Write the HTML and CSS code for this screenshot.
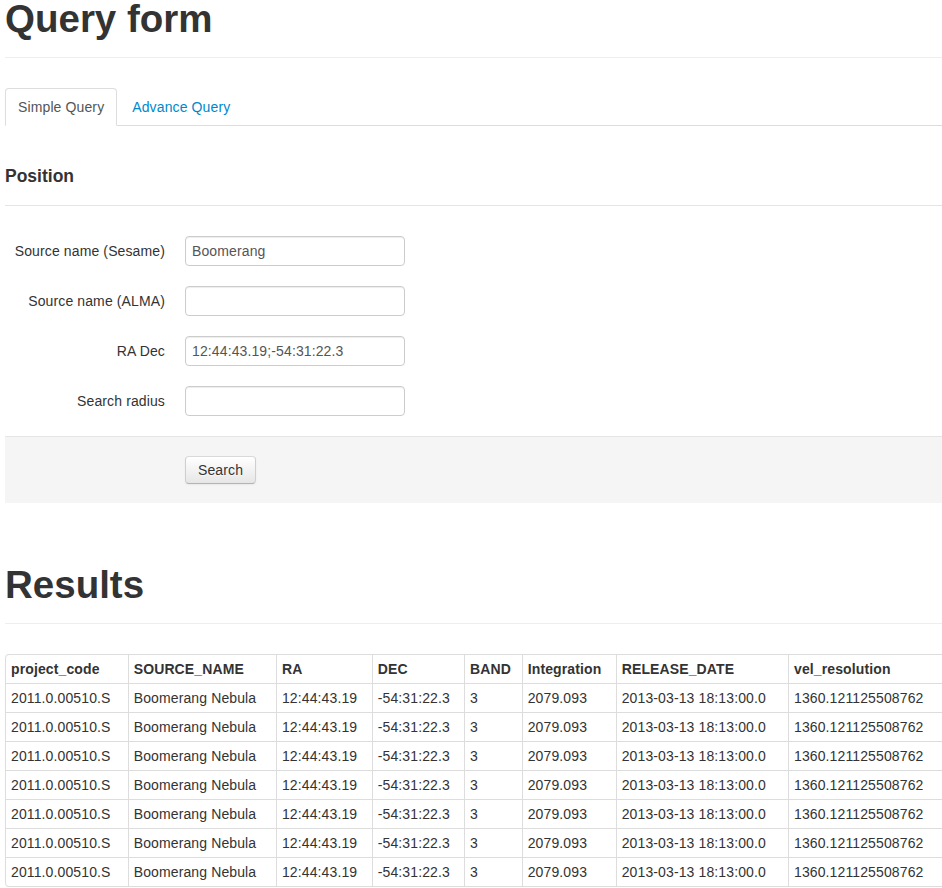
FILE: index.html
```html
<!DOCTYPE html>
<html>
<head>
<meta charset="utf-8">
<title>Query form</title>
<link rel="stylesheet" href="styles.css">
</head>
<body>
<div class="container">
  <div class="page-header">
    <h1>Query form</h1>
  </div>

  <ul class="nav-tabs">
    <li class="active"><a href="#simple">Simple Query</a></li>
    <li><a href="#advance">Advance Query</a></li>
  </ul>

  <form class="form-horizontal">
    <div class="legend">Position</div>
    <div class="control-group">
      <label class="control-label">Source name (Sesame)</label>
      <div class="controls"><input type="text" value="Boomerang"></div>
    </div>
    <div class="control-group">
      <label class="control-label">Source name (ALMA)</label>
      <div class="controls"><input type="text" value=""></div>
    </div>
    <div class="control-group">
      <label class="control-label">RA Dec</label>
      <div class="controls"><input type="text" value="12:44:43.19;-54:31:22.3"></div>
    </div>
    <div class="control-group">
      <label class="control-label">Search radius</label>
      <div class="controls"><input type="text" value=""></div>
    </div>
    <div class="form-actions">
      <button type="button" class="btn">Search</button>
    </div>
  </form>

  <div class="results">
    <div class="page-header">
      <h1>Results</h1>
    </div>
    <table class="table">
      <thead>
        <tr><th>project_code</th><th>SOURCE_NAME</th><th>RA</th><th>DEC</th><th>BAND</th><th>Integration</th><th>RELEASE_DATE</th><th>vel_resolution</th></tr>
      </thead>
      <tbody>
        <tr><td>2011.0.00510.S</td><td>Boomerang Nebula</td><td>12:44:43.19</td><td>-54:31:22.3</td><td>3</td><td>2079.093</td><td>2013-03-13 18:13:00.0</td><td>1360.121125508762</td></tr>
        <tr><td>2011.0.00510.S</td><td>Boomerang Nebula</td><td>12:44:43.19</td><td>-54:31:22.3</td><td>3</td><td>2079.093</td><td>2013-03-13 18:13:00.0</td><td>1360.121125508762</td></tr>
        <tr><td>2011.0.00510.S</td><td>Boomerang Nebula</td><td>12:44:43.19</td><td>-54:31:22.3</td><td>3</td><td>2079.093</td><td>2013-03-13 18:13:00.0</td><td>1360.121125508762</td></tr>
        <tr><td>2011.0.00510.S</td><td>Boomerang Nebula</td><td>12:44:43.19</td><td>-54:31:22.3</td><td>3</td><td>2079.093</td><td>2013-03-13 18:13:00.0</td><td>1360.121125508762</td></tr>
        <tr><td>2011.0.00510.S</td><td>Boomerang Nebula</td><td>12:44:43.19</td><td>-54:31:22.3</td><td>3</td><td>2079.093</td><td>2013-03-13 18:13:00.0</td><td>1360.121125508762</td></tr>
        <tr><td>2011.0.00510.S</td><td>Boomerang Nebula</td><td>12:44:43.19</td><td>-54:31:22.3</td><td>3</td><td>2079.093</td><td>2013-03-13 18:13:00.0</td><td>1360.121125508762</td></tr>
        <tr><td>2011.0.00510.S</td><td>Boomerang Nebula</td><td>12:44:43.19</td><td>-54:31:22.3</td><td>3</td><td>2079.093</td><td>2013-03-13 18:13:00.0</td><td>1360.121125508762</td></tr>
      </tbody>
    </table>
  </div>
</div>
</body>
</html>
```
FILE: styles.css
```css
html, body {
  overflow: hidden;
}
body {
  margin: 0;
  padding: 0 0 0 5px;
  font-family: "Liberation Sans", Arial, sans-serif;
  font-size: 14px;
  line-height: 20px;
  letter-spacing: 0.12px;
  color: #333;
  background: #fff;
}
.container {
  width: 940px;
}
.page-header {
  padding-bottom: 19px;
  border-bottom: 1px solid #eee;
  margin-bottom: 30px;
}
.page-header h1 {
  margin: 0;
  font-size: 38.5px;
  line-height: 38px;
  font-weight: bold;
  letter-spacing: 0;
}
.nav-tabs {
  list-style: none;
  margin: 0;
  padding: 0;
  display: flex;
  border-bottom: 1px solid #ddd;
}
.nav-tabs li {
  margin-bottom: -1px;
}
.nav-tabs a {
  display: block;
  padding: 8px 12px;
  line-height: 20px;
  margin-right: 2px;
  border: 1px solid transparent;
  border-radius: 4px 4px 0 0;
  color: #0088cc;
  text-decoration: none;
}
.nav-tabs li.active a {
  color: #555;
  background: #fff;
  border-color: #ddd #ddd transparent;
}
.form-horizontal {
  margin: 0;
}
.legend {
  margin-top: 40px;
  font-size: 17.5px;
  font-weight: bold;
  line-height: 20px;
  letter-spacing: 0;
  padding-bottom: 19px;
  border-bottom: 1px solid #e5e5e5;
  margin-bottom: 30px;
}
.control-group {
  display: flex;
  margin-bottom: 20px;
}
.control-label {
  width: 160px;
  flex: none;
  text-align: right;
  padding-top: 5px;
  line-height: 20px;
}
.controls {
  margin-left: 20px;
}
.controls input {
  box-sizing: content-box;
  width: 206px;
  height: 20px;
  padding: 4px 6px;
  margin: 0;
  font-family: "Liberation Sans", Arial, sans-serif;
  font-size: 14px;
  line-height: 20px;
  letter-spacing: 0.12px;
  color: #555;
  background: #fff;
  border: 1px solid #ccc;
  border-radius: 4px;
  box-shadow: inset 0 1px 1px rgba(0, 0, 0, 0.075);
  outline: none;
  display: block;
}
.form-actions {
  background: #f5f5f5;
  border-top: 1px solid #e5e5e5;
  padding: 19px 20px 19px 180px;
}
.btn {
  display: block;
  padding: 3px 12px;
  font-family: "Liberation Sans", Arial, sans-serif;
  font-size: 14px;
  line-height: 20px;
  letter-spacing: 0.12px;
  color: #333;
  text-shadow: 0 1px 1px rgba(255, 255, 255, 0.75);
  background: linear-gradient(to bottom, #ffffff, #e6e6e6);
  border: 1px solid #cccccc;
  border-color: #d9d9d9 #cfcfcf #b3b3b3;
  border-radius: 4px;
  box-shadow: inset 0 1px 0 rgba(255, 255, 255, 0.2), 0 1px 2px rgba(0, 0, 0, 0.05);
}
.results {
  margin-top: 63px;
}
.table {
  width: 940px;
  border-collapse: separate;
  border-spacing: 0;
  border: 1px solid #ddd;
  border-left: 0;
  border-radius: 4px;
}
.table th,
.table td {
  padding: 4px 5px;
  line-height: 20px;
  text-align: left;
  vertical-align: top;
  border-left: 1px solid #ddd;
  border-top: 1px solid #ddd;
  white-space: nowrap;
}
.table th {
  font-weight: bold;
  vertical-align: bottom;
}
.table thead tr:first-child th {
  border-top: 0;
}
.table thead tr:first-child th:first-child {
  border-top-left-radius: 4px;
}
.table tbody tr:last-child td:first-child {
  border-bottom-left-radius: 4px;
}
```
